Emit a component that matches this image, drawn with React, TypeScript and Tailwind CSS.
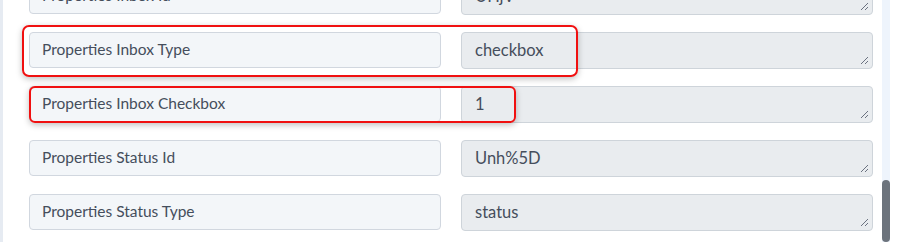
const rows = [
  { label: "Properties Inbox Id", value: "UHjV" },
  { label: "Properties Inbox Type", value: "checkbox" },
  { label: "Properties Inbox Checkbox", value: "1" },
  { label: "Properties Status Id", value: "Unh%5D" },
  { label: "Properties Status Type", value: "status" },
]

const Grip = () => (
  <svg className="absolute right-[3px] bottom-[3px]" width="9" height="9" viewBox="0 0 9 9">
    <path d="M8 1L1 8M8 5L5 8" stroke="#6b7280" strokeWidth="1" />
  </svg>
)

export default function App() {
  return (
    <div className="w-[908px] h-[242px] flex bg-white overflow-hidden font-['Lato',sans-serif]">
      <div className="relative flex-1 border-l-[3px] border-[#e6ebf2] overflow-hidden">
        <div className="flex flex-col gap-[17px] mt-[-22px] pl-[26px] pr-[9px]">
          {rows.map((r) => (
            <div key={r.label} className="flex gap-[20px] items-start">
              <div className="w-[412px] h-[36px] flex items-center px-[12px] rounded-[4px] border border-[#d1d7df] bg-[#f3f6f9] text-[15.5px] text-[#454e5c]">
                {r.label}
              </div>
              <div className="relative w-[412px] h-[37px] flex items-center px-[13px] rounded-[4px] border border-[#ced4da] bg-[#e9ecef] text-[16.5px] text-[#454e5c]">
                {r.value}
                <Grip />
              </div>
            </div>
          ))}
        </div>
        <div className="absolute left-[19px] top-[25px] w-[556px] h-[52px] rounded-[7px] border-2 border-[#f01010] shadow-[0_2px_6px_rgba(0,0,0,0.25)]" />
        <div className="absolute left-[26px] top-[86px] w-[487px] h-[37px] rounded-[6px] border-2 border-[#f01010] shadow-[0_2px_6px_rgba(0,0,0,0.25)]" />
      </div>
      <div className="w-[8px] flex flex-col bg-[#eef4fc]">
        <div className="flex-1" />
        <div className="h-[62px] rounded-full bg-[#6c737c]" />
      </div>
      <div className="w-[18px] bg-white" />
    </div>
  )
}
